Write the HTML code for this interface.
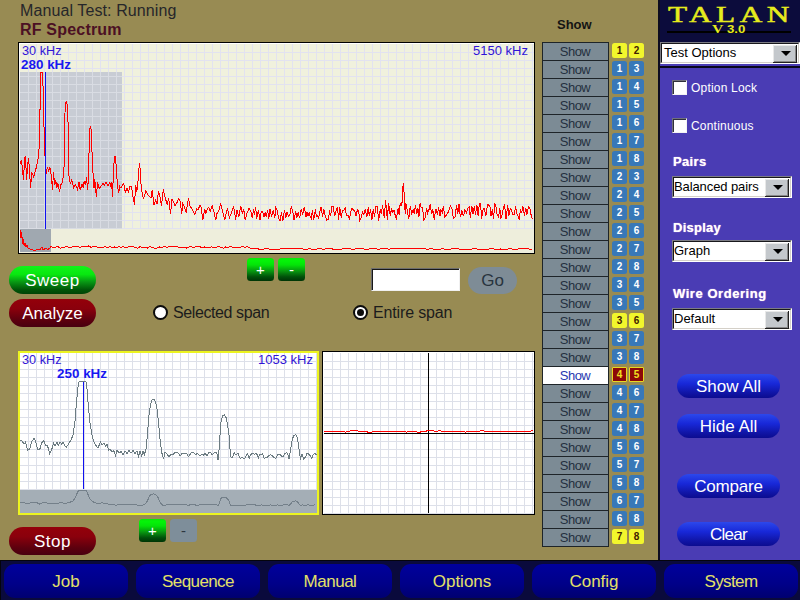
<!DOCTYPE html>
<html><head><meta charset="utf-8"><title>TALAN</title>
<style>
html,body{margin:0;padding:0}
body{width:800px;height:600px;overflow:hidden;background:#988b53;position:relative;font-family:"Liberation Sans",sans-serif;color:#1c1c1c}
.abs{position:absolute}
.t{position:absolute;white-space:nowrap;line-height:1}
svg{position:absolute;left:0;top:0}
svg text{font-family:"Liberation Sans",sans-serif}
.pill{position:absolute;border-radius:14px;color:#fff;font-size:17px;text-align:center;white-space:nowrap}
.row{position:absolute;left:542px;width:110px;height:18px}
.sb{position:absolute;left:0;top:0;width:65px;text-indent:-1px;height:17px;border:1px solid #1e2428;border-bottom:none;background:#7c8b95;color:#243040;font-size:13px;line-height:17px;text-align:center;letter-spacing:-0.5px}
.row i{position:absolute;left:70px;top:1px;width:15px;height:15px;border-radius:2.5px;background:#3878b8;color:#fff;font-style:normal;font-weight:bold;font-size:10px;line-height:15px;text-align:center}
.row i.n2{left:87px}
.row.yl i{background:#f2f62c;color:#402000}
.row.rd i{border-radius:1px;background:#8c0808;color:#f0e020;box-shadow:inset 0 0 0 1px #e8d820}
.row.rd .sb{background:#fff;color:#2838b0}
.dd{position:absolute;box-sizing:border-box;height:22px;background:#fff;border:1px solid;border-color:#7c7c84 #fff #fff #7c7c84;font-size:13px;color:#000}
.dd:before{content:"";position:absolute;left:0;top:0;right:0;bottom:0;border:1px solid;border-color:#18181c #d4d0c8 #d4d0c8 #18181c}
.dd span{position:absolute;left:3px;top:3px;line-height:14px;white-space:nowrap}
.dd b{position:absolute;right:2px;top:2px;width:24px;height:18px;background:#c4c8cc;box-shadow:inset -1px -1px 0 #202020,inset 1px 1px 0 #e8e8e8,inset -2px -2px 0 #888}
.dd b:after{content:"";position:absolute;left:8px;top:6px;border:5px solid transparent;border-top:5px solid #000;border-bottom:none}
.cb{position:absolute;width:15px;height:15px;box-sizing:border-box;background:#fff;border:1px solid;border-color:#70707c #f4f4f4 #f4f4f4 #70707c;box-shadow:inset 1px 1px 0 #30303c}
.lab{position:absolute;color:#fff;font-size:12px;letter-spacing:.2px;white-space:nowrap;line-height:14px}
.hd{position:absolute;color:#fff;font-weight:bold;font-size:13px;white-space:nowrap;line-height:14px;text-shadow:0 0 1px #f8c8e8}
.nav{position:absolute;top:564px;width:124px;height:34px;border-radius:11px;background:linear-gradient(#00009c,#000088 60%,#000070);color:#e4e068;font-size:17px;line-height:36px;text-align:center}
.sq{position:absolute;width:27px;height:23px;border-radius:3.5px;color:#fff;font-size:15px;line-height:23px;text-align:center}
.g{background:linear-gradient(#08e808,#04f408 12%,#04e408 30%,#089c10 55%,#00500a 82%,#003406)}
.bl{background:linear-gradient(#2c48ec,#1828d8 40%,#1014a4 80%,#0c0c90)}
</style></head><body>

<div class="t" style="left:20px;top:3px;font-size:16px;color:#26262a;letter-spacing:.1px">Manual Test: Running</div>
<div class="t" style="left:20px;top:22px;font-size:16px;font-weight:bold;color:#4c1024;letter-spacing:.2px">RF Spectrum</div>
<div class="t" style="left:557px;top:18px;font-size:13px;font-weight:bold;color:#141414">Show</div>

<svg width="800" height="600" viewBox="0 0 800 600">
<!-- upper chart -->
<rect x="18" y="42" width="517" height="212" fill="#000" shape-rendering="crispEdges"/>
<rect x="19" y="43" width="515" height="210" fill="#fff" shape-rendering="crispEdges"/>
<rect x="20" y="44" width="514" height="209" fill="#f0f1dd" shape-rendering="crispEdges"/>
<path d="M28.5 44V229M36.5 44V229M44.5 44V229M52.5 44V229M60.5 44V229M68.5 44V229M76.5 44V229M84.5 44V229M92.5 44V229M100.5 44V229M108.5 44V229M116.5 44V229M124.5 44V229M132.5 44V229M140.5 44V229M148.5 44V229M156.5 44V229M164.5 44V229M172.5 44V229M180.5 44V229M188.5 44V229M196.5 44V229M204.5 44V229M212.5 44V229M220.5 44V229M228.5 44V229M236.5 44V229M244.5 44V229M252.5 44V229M260.5 44V229M268.5 44V229M276.5 44V229M284.5 44V229M292.5 44V229M300.5 44V229M308.5 44V229M316.5 44V229M324.5 44V229M332.5 44V229M340.5 44V229M348.5 44V229M356.5 44V229M364.5 44V229M372.5 44V229M380.5 44V229M388.5 44V229M396.5 44V229M404.5 44V229M412.5 44V229M420.5 44V229M428.5 44V229M436.5 44V229M444.5 44V229M452.5 44V229M460.5 44V229M468.5 44V229M476.5 44V229M484.5 44V229M492.5 44V229M500.5 44V229M508.5 44V229M516.5 44V229M524.5 44V229M532.5 44V229M20 52.5H534M20 60.5H534M20 68.5H534M20 76.5H534M20 84.5H534M20 92.5H534M20 100.5H534M20 108.5H534M20 116.5H534M20 124.5H534M20 132.5H534M20 140.5H534M20 148.5H534M20 156.5H534M20 164.5H534M20 172.5H534M20 180.5H534M20 188.5H534M20 196.5H534M20 204.5H534M20 212.5H534M20 220.5H534M20 228.5H534" stroke="#e2e2f0" stroke-width="1" fill="none" shape-rendering="crispEdges"/>
<rect x="20" y="72" width="102" height="157" fill="#c8ccd4" shape-rendering="crispEdges"/>
<path d="M28.5 72V229M36.5 72V229M44.5 72V229M52.5 72V229M60.5 72V229M68.5 72V229M76.5 72V229M84.5 72V229M92.5 72V229M100.5 72V229M108.5 72V229M116.5 72V229M20 76.5H122M20 84.5H122M20 92.5H122M20 100.5H122M20 108.5H122M20 116.5H122M20 124.5H122M20 132.5H122M20 140.5H122M20 148.5H122M20 156.5H122M20 164.5H122M20 172.5H122M20 180.5H122M20 188.5H122M20 196.5H122M20 204.5H122M20 212.5H122M20 220.5H122M20 228.5H122" stroke="#d9dce3" stroke-width="1" fill="none" shape-rendering="crispEdges"/>
<rect x="20" y="229" width="514" height="24" fill="#eeeedc" shape-rendering="crispEdges"/>
<rect x="20" y="229" width="31" height="23" fill="#a0a8b0" shape-rendering="crispEdges"/>
<polyline points="20.2,164.0 21.2,160.2 22.0,164.8 23.5,179.8 24.7,157.2 25.5,156.5 26.5,179.8 28.3,158.0 29.2,165.5 30.5,187.7 31.8,172.2 33.7,176.8 36.2,167.8 38.5,156.5 39.7,140.0 40.4,72.5 42.7,72.5 42.9,81.0 43.8,120.7 44.5,140.0 45.0,155.8 46.0,174.5 47.5,167.0 48.7,170.8 49.8,167.0 51.2,175.2 52.5,189.5 53.5,172.2 54.7,185.0 55.8,179.8 56.8,188.0 57.7,182.8 59.5,191.8 61.0,184.2 62.5,183.5 64.0,167.8 64.5,133.5 65.2,105.0 66.5,100.8 67.8,109.5 68.3,140.0 68.8,174.5 70.3,183.5 71.8,179.8 73.8,188.0 75.2,184.2 77.5,189.5 79.0,182.0 80.2,190.2 82.0,184.2 83.2,188.0 84.2,181.2 85.3,185.0 86.5,177.5 87.7,190.2 88.8,167.8 89.2,140.0 90.2,126.0 91.4,130.5 92.2,158.0 93.2,176.8 94.0,188.0 94.8,179.0 95.5,189.5 96.5,196.7 97.5,182.0 99.2,188.8 100.8,186.5 103.0,183.5 104.5,185.0 106.0,182.0 107.8,185.8 109.8,182.8 110.5,185.0 111.5,182.0 112.5,196.7 113.5,170.0 114.5,156.2 115.5,156.2 116.2,167.0 117.2,182.0 118.5,193.2 119.8,186.5 121.0,188.0 122.2,185.8 123.7,183.5 125.2,192.5 127.0,188.0 128.5,191.8 130.0,186.5 131.5,186.5 132.7,195.5 134.5,204.5 135.7,185.0 136.8,191.8 137.8,183.5 139.4,163.2 140.5,172.2 141.2,188.0 143.5,199.2 145.8,191.0 148.0,194.8 149.5,196.2 151.0,197.8 152.2,190.2 154.0,205.2 155.5,200.0 157.0,203.8 158.5,191.0 160.0,197.0 161.5,206.0 163.3,189.5 165.2,197.8 167.2,204.5 168.7,197.8 170.5,214.2 172.0,199.2 173.5,201.5 175.0,206.0 176.8,203.0 178.8,198.5 180.2,201.5 181.8,213.5 182.8,203.8 184.3,206.8 186.2,212.0 188.5,197.8 190.0,206.0 192.2,209.0 194.8,214.2 196.8,209.0 198.2,209.8 199.8,205.2 201.2,207.5 202.8,220.2 204.7,209.0 205.8,214.2 207.2,209.0 208.8,207.5 210.2,211.2 212.2,206.0 214.0,212.0 215.8,220.2 217.0,213.5 218.8,210.5 220.8,203.8 222.7,212.0 224.8,219.5 227.5,208.2 229.3,218.0 231.2,213.5 233.5,206.0 235.8,219.5 236.8,209.8 238.8,217.2 240.7,206.0 242.5,213.5 243.7,209.0 245.2,220.2 247.0,212.8 249.2,208.2 250.8,211.5 252.3,218.0 253.5,209.2 254.5,215.0 255.6,207.1 256.7,218.6 258.4,209.9 260.0,220.1 261.2,211.7 262.5,211.3 263.9,216.9 265.2,212.1 266.4,217.3 267.6,209.6 268.8,219.0 270.0,209.1 271.6,216.4 273.3,209.8 274.8,217.7 275.8,207.5 277.2,210.5 278.7,218.3 280.1,220.6 281.4,212.1 282.9,221.0 284.5,210.0 285.9,217.5 287.0,212.1 288.6,216.1 289.8,215.0 291.2,206.8 292.7,210.7 294.0,220.2 295.7,211.4 296.9,217.7 298.3,212.5 299.6,218.2 301.2,209.1 302.7,214.9 304.3,206.8 305.9,217.1 306.9,212.1 308.0,215.6 309.2,212.5 310.3,216.9 311.3,218.5 312.4,210.2 313.7,220.0 315.4,209.4 316.4,216.7 317.6,215.5 318.6,217.9 319.8,212.3 321.1,206.9 322.6,216.9 323.7,209.0 325.3,215.9 326.8,220.0 328.4,219.3 329.6,210.2 330.6,216.3 331.8,206.3 333.1,206.1 334.7,215.9 335.9,211.2 337.3,207.0 338.7,219.7 339.7,206.6 341.3,217.6 342.4,210.3 344.0,209.9 345.3,207.8 346.4,215.5 348.0,215.5 349.6,218.8 350.8,211.6 351.8,208.3 353.2,209.7 354.8,211.1 356.0,216.1 357.4,209.8 358.5,210.2 359.8,220.4 361.1,217.8 362.5,212.4 363.8,214.5 365.3,209.4 366.9,216.6 368.2,207.4 369.3,216.1 370.5,209.2 371.9,220.4 373.2,209.2 374.5,217.4 375.9,206.4 377.4,206.4 378.6,220.6 380.2,209.6 381.5,214.3 382.5,204.6 384.2,217.9 385.6,200.5 387.3,219.6 388.6,203.1 390.2,215.7 391.5,209.0 392.8,212.6 394.1,210.4 395.4,216.3 396.4,218.4 398.1,208.5 399.1,214.5 400.2,203.7 401.8,206.0 403.2,183.0 404.4,196.0 405.2,214.0 405.8,203.5 407.2,209.9 408.8,219.0 410.2,206.4 411.8,213.5 413.2,209.7 414.3,214.0 415.5,204.8 416.7,213.8 418.0,208.6 419.0,216.6 420.1,203.5 421.2,207.3 422.5,207.6 423.9,219.9 425.1,217.8 426.6,207.9 427.6,213.0 429.1,209.3 430.2,204.0 431.6,214.3 432.8,209.3 434.2,219.7 435.8,208.7 437.5,215.2 438.5,206.9 439.9,216.3 440.9,209.8 442.2,212.7 443.4,206.1 444.7,217.4 446.2,215.4 447.5,213.6 449.0,210.2 450.6,205.8 452.1,209.5 453.4,218.8 455.0,216.9 456.6,205.3 457.8,213.5 459.0,204.2 460.4,217.2 461.9,210.5 463.5,216.3 464.8,210.0 466.4,213.1 467.5,209.0 469.1,206.8 470.3,217.6 471.9,205.7 472.9,214.4 474.4,206.2 475.4,214.5 476.9,205.4 478.1,216.0 479.4,203.8 480.6,203.5 481.6,218.6 483.3,208.5 484.4,208.9 485.8,216.4 487.5,204.3 488.9,205.2 490.0,206.9 491.0,216.2 492.3,209.4 493.6,218.8 494.6,204.2 495.7,205.2 497.3,215.3 498.6,216.9 499.8,208.4 500.9,218.8 502.1,214.4 503.3,209.1 504.5,203.9 506.1,219.4 507.7,205.1 508.8,215.9 510.3,208.4 511.3,209.5 512.7,214.7 514.2,214.5 515.6,206.3 516.9,213.7 518.1,216.2 519.2,220.0 520.5,209.1 521.6,213.2 522.8,206.2 524.4,215.6 525.7,207.7 526.9,214.6 528.6,206.7 530.0,208.9 531.2,215.5 532.5,218.9" fill="none" stroke="#ff0000" stroke-width="1" shape-rendering="crispEdges"/>
<polyline points="20.0,229.5 21.0,238.0 21.6,232.0 22.6,244.0 23.3,239.0 24.2,246.0 25.0,243.0 26.0,247.0 27.0,245.5 28.0,248.0 30.0,249.0 33.0,250.0 36.0,250.0 38.0,249.0 40.0,249.5 42.0,247.0 43.0,249.5 46.0,248.5 48.0,249.5 50.0,248.0 51.0,246.4 52.5,247.7 55.4,247.3 57.8,246.4 59.9,248.1 62.6,247.9 65.6,246.8 67.2,246.7 69.5,247.6 72.4,246.9 74.9,247.0 77.1,246.6 78.6,247.0 80.5,247.3 82.9,246.1 84.6,246.1 87.1,246.9 88.8,245.7 91.1,247.4 93.1,246.8 95.5,246.4 97.5,247.2 100.4,247.6 103.3,247.3 105.1,246.8 108.0,247.7 110.0,246.4 112.3,247.6 114.4,246.9 116.9,248.1 118.7,246.5 120.7,247.2 123.3,246.8 126.0,247.7 128.2,246.8 131.2,247.0 133.9,246.8 135.7,247.8 137.7,248.1 139.9,246.7 141.7,247.2 144.2,248.1 146.0,247.1 147.8,248.2 149.5,246.5 151.1,247.1 153.9,248.0 156.5,248.2 159.4,247.0 161.2,248.1 163.8,246.5 166.3,247.1 168.4,247.0 170.1,246.4 172.1,247.0 175.0,246.6 177.9,246.8 180.0,247.9 182.7,247.2 184.3,247.3 186.3,248.1 188.1,247.1 191.0,246.5 193.1,247.9 195.7,246.5 197.3,246.5 200.2,246.9 202.8,248.0 204.8,246.9 207.7,247.5 209.6,247.7 211.6,246.9 213.1,247.8 216.0,247.5 218.9,246.4 220.8,247.3 223.7,248.1 225.8,246.9 227.9,247.3 230.8,246.7 233.5,247.7 236.2,247.8 238.7,247.0 240.6,247.1 243.3,246.5 245.1,247.8 247.0,246.5 248.5,247.4 250.5,248.2 253.3,248.2 255.2,248.6 258.5,249.0 263.7,249.0 267.4,248.9 272.2,249.2 277.5,249.3 282.5,248.7 288.0,248.8 292.7,248.9 297.9,248.7 301.6,248.8 305.1,249.3 309.8,248.8 314.0,249.4 318.5,248.8 324.0,249.1 329.9,248.6 334.4,249.3 339.9,249.4 343.0,248.8 346.4,248.7 352.3,249.1 358.1,248.9 363.7,249.0 367.4,249.2 373.3,248.6 378.1,249.1 381.7,248.9 385.2,248.7 388.9,249.1 393.9,248.7 396.9,248.8 401.9,248.7 405.9,248.7 411.3,249.0 414.5,248.6 418.6,249.0 423.6,248.6 427.0,249.2 431.3,248.8 435.2,249.4 439.1,249.1 443.2,248.9 448.8,249.4 452.9,248.7 458.1,248.7 461.1,249.4 465.4,249.3 469.6,249.3 474.0,248.7 477.0,249.0 481.9,249.4 485.2,249.1 489.3,249.0 492.8,248.8 497.3,249.4 500.6,249.0 506.1,249.4 509.6,248.7 515.5,249.4 519.9,248.6 525.7,248.9 531.4,249.1 531.5,250.0" fill="none" stroke="#ff0000" stroke-width="1" shape-rendering="crispEdges"/>
<rect x="45" y="72" width="1" height="157" fill="#1010f0" shape-rendering="crispEdges"/>
<text x="22" y="55" font-size="13" fill="#3014d6" textLength="39.5" lengthAdjust="spacingAndGlyphs">30 kHz</text>
<text x="21" y="69" font-size="13" font-weight="bold" fill="#1818f0" textLength="50" lengthAdjust="spacingAndGlyphs">280 kHz</text>
<text x="473" y="55" font-size="13" fill="#3014d6" textLength="55" lengthAdjust="spacingAndGlyphs">5150 kHz</text>

<!-- lower-left chart -->
<rect x="18" y="351" width="301" height="164" fill="#ecf420" shape-rendering="crispEdges"/>
<rect x="20" y="353" width="297" height="160" fill="#fff" shape-rendering="crispEdges"/>
<path d="M28.5 353V490M36.5 353V490M44.5 353V490M52.5 353V490M60.5 353V490M68.5 353V490M76.5 353V490M84.5 353V490M92.5 353V490M100.5 353V490M108.5 353V490M116.5 353V490M124.5 353V490M132.5 353V490M140.5 353V490M148.5 353V490M156.5 353V490M164.5 353V490M172.5 353V490M180.5 353V490M188.5 353V490M196.5 353V490M204.5 353V490M212.5 353V490M220.5 353V490M228.5 353V490M236.5 353V490M244.5 353V490M252.5 353V490M260.5 353V490M268.5 353V490M276.5 353V490M284.5 353V490M292.5 353V490M300.5 353V490M308.5 353V490M316.5 353V490M20 361.5H317M20 369.5H317M20 377.5H317M20 385.5H317M20 393.5H317M20 401.5H317M20 409.5H317M20 417.5H317M20 425.5H317M20 433.5H317M20 441.5H317M20 449.5H317M20 457.5H317M20 465.5H317M20 473.5H317M20 481.5H317M20 489.5H317" stroke="#dde0e9" stroke-width="1" fill="none" shape-rendering="crispEdges"/>
<rect x="20" y="490" width="297" height="23" fill="#a4aeb6" shape-rendering="crispEdges"/>
<polyline points="20.4,440.0 22.0,441.0 24.0,444.0 25.6,442.0 27.6,450.0 29.6,449.0 32.0,441.0 34.0,438.6 35.6,441.0 37.6,449.4 39.6,450.0 41.6,443.0 43.6,440.6 45.6,445.0 47.6,446.0 49.6,453.4 51.6,450.0 53.6,443.0 55.0,446.0 57.0,442.6 58.4,445.4 60.0,442.0 61.6,444.0 63.0,442.0 65.0,446.0 66.4,447.4 68.4,444.0 71.0,440.0 73.0,435.0 75.0,421.0 76.6,401.0 78.0,387.0 79.0,381.6 86.0,381.6 87.0,389.0 88.4,407.0 90.0,423.0 92.0,435.0 94.0,442.0 96.0,445.4 98.0,448.0 100.4,442.0 102.0,444.6 104.0,443.0 105.6,446.0 107.0,444.0 108.4,450.0 110.0,449.0 112.0,452.0 114.0,450.6 115.6,456.0 117.0,450.0 119.0,453.0 121.0,451.6 123.0,454.6 125.0,451.0 127.0,453.4 129.0,450.6 131.0,453.0 133.0,450.6 135.0,453.4 137.0,451.0 138.6,456.6 140.0,450.6 141.6,456.0 143.0,451.0 144.4,454.6 146.0,449.0 147.4,435.0 149.0,415.0 150.4,405.0 152.0,400.0 154.0,399.0 155.6,402.0 157.0,409.0 158.4,421.0 160.0,439.0 161.6,452.0 163.6,459.0 165.0,452.0 167.0,454.0 169.0,457.0 171.0,454.0 173.0,455.0 175.0,452.0 176.5,452.8 178.5,453.1 180.1,456.2 182.1,452.9 183.5,454.0 185.3,453.9 186.6,453.2 188.5,456.5 189.7,454.8 191.7,452.2 193.7,452.6 195.5,454.8 197.4,453.5 199.0,454.9 200.6,455.3 202.3,454.2 203.5,455.1 205.2,453.2 207.1,455.9 208.8,452.9 210.5,452.5 211.8,454.2 213.1,454.2 214.8,452.2 216.6,452.4 217.0,454.0 218.0,460.0 219.0,450.0 220.0,435.0 221.0,422.0 222.4,416.0 224.4,415.0 226.4,418.0 227.6,425.0 229.0,435.0 230.0,449.0 231.0,457.0 232.5,457.2 234.2,452.8 235.9,454.8 238.1,453.3 240.1,458.5 242.1,457.4 243.4,458.4 245.1,458.2 247.3,453.5 249.2,458.1 250.5,454.6 252.5,453.5 254.6,454.1 256.6,453.4 258.3,458.0 259.7,454.1 261.4,454.4 262.6,453.6 264.0,458.1 265.9,457.9 267.2,457.2 268.6,455.7 270.4,454.7 272.5,455.8 274.2,457.8 275.6,458.5 277.4,454.9 279.4,454.1 281.6,456.0 283.1,457.1 284.8,453.6 286.7,452.8 288.0,455.0 289.0,459.0 290.4,451.0 292.0,441.0 293.6,435.6 295.6,434.6 297.0,437.0 298.4,444.0 299.6,454.0 300.6,458.0 302.0,454.5 303.8,458.9 305.6,457.0 307.1,453.0 308.4,453.9 310.2,455.6 311.9,458.4 313.2,454.4 315.1,453.1 316.3,455.1" fill="none" stroke="#6c7c82" stroke-width="1" shape-rendering="crispEdges"/>
<polyline points="20.4,502.0 24.0,502.8 27.6,504.0 32.0,502.2 35.6,502.2 39.6,504.0 43.6,502.2 47.6,503.2 51.6,504.0 55.0,503.2 58.4,503.1 61.6,502.8 65.0,503.2 68.4,502.8 73.0,501.0 75.0,498.3 76.6,494.3 78.0,491.6 79.0,490.5 86.0,490.5 87.0,492.0 88.4,495.5 90.0,498.7 92.0,501.0 94.0,502.4 98.0,503.6 102.0,502.9 105.6,503.2 108.4,504.0 112.0,504.4 115.6,505.2 119.0,504.6 123.0,504.9 127.0,504.7 131.0,504.6 135.0,504.7 138.6,505.3 141.6,505.2 144.4,504.9 147.4,501.0 149.0,497.1 150.4,495.1 152.0,494.1 154.0,493.9 155.6,494.5 157.0,495.9 158.4,498.3 160.0,501.8 161.6,504.4 163.6,505.8 167.0,504.8 171.0,504.8 175.0,504.4 178.5,504.6 182.1,504.6 185.3,504.8 188.5,505.3 191.7,504.4 195.5,505.0 199.0,505.0 202.3,504.8 205.2,504.6 208.8,504.6 211.8,504.8 214.8,504.4 217.0,504.8 218.0,506.0 219.0,504.0 220.0,501.0 221.0,498.5 222.4,497.3 224.4,497.1 226.4,497.7 227.6,499.1 229.0,501.0 230.0,503.8 231.0,505.4 232.5,505.4 235.9,505.0 240.1,505.7 243.4,505.7 247.3,504.7 250.5,504.9 254.6,504.8 258.3,505.6 261.4,504.9 264.0,505.6 267.2,505.4 270.4,504.9 274.2,505.6 277.4,505.0 281.6,505.2 284.8,504.7 288.0,505.0 289.0,505.8 290.4,504.2 292.0,502.2 293.6,501.2 295.6,501.0 297.0,501.4 298.4,502.8 299.6,504.8 300.6,505.6 302.0,504.9 305.6,505.4 308.4,504.8 311.9,505.7 315.1,504.6" fill="none" stroke="#74808a" stroke-width="1" shape-rendering="crispEdges"/>
<rect x="83" y="382" width="1" height="107" fill="#1010f0" shape-rendering="crispEdges"/>
<text x="22" y="364" font-size="13" fill="#3014d6" textLength="39.5" lengthAdjust="spacingAndGlyphs">30 kHz</text>
<text x="57" y="378" font-size="13" font-weight="bold" fill="#1818f0" textLength="50" lengthAdjust="spacingAndGlyphs">250 kHz</text>
<text x="258" y="364" font-size="13" fill="#3014d6" textLength="55" lengthAdjust="spacingAndGlyphs">1053 kHz</text>

<!-- lower-right chart -->
<rect x="322" y="351" width="213" height="164" fill="#000" shape-rendering="crispEdges"/>
<rect x="323" y="352" width="211" height="162" fill="#fff" shape-rendering="crispEdges"/>
<path d="M332.5 353V514M340.5 353V514M348.5 353V514M356.5 353V514M364.5 353V514M372.5 353V514M380.5 353V514M388.5 353V514M396.5 353V514M404.5 353V514M412.5 353V514M420.5 353V514M428.5 353V514M436.5 353V514M444.5 353V514M452.5 353V514M460.5 353V514M468.5 353V514M476.5 353V514M484.5 353V514M492.5 353V514M500.5 353V514M508.5 353V514M516.5 353V514M524.5 353V514M532.5 353V514M324 361.5H534M324 369.5H534M324 377.5H534M324 385.5H534M324 393.5H534M324 401.5H534M324 409.5H534M324 417.5H534M324 425.5H534M324 433.5H534M324 441.5H534M324 449.5H534M324 457.5H534M324 465.5H534M324 473.5H534M324 481.5H534M324 489.5H534M324 497.5H534M324 505.5H534M324 513.5H534" stroke="#dde0e9" stroke-width="1" fill="none" shape-rendering="crispEdges"/>
<rect x="428" y="353" width="1" height="160" fill="#000" shape-rendering="crispEdges"/>
<rect x="324" y="433" width="210" height="1" fill="#000" shape-rendering="crispEdges"/>
<polyline points="324.0,431.5 327.6,431.5 331.4,431.5 334.0,432.1 336.4,431.5 341.3,431.5 345.4,432.1 347.7,431.5 352.3,430.5 355.5,430.5 360.4,431.5 364.3,431.5 368.1,432.1 371.9,432.1 374.7,431.5 376.8,431.5 380.0,431.5 382.5,431.5 384.5,431.5 386.9,431.5 390.5,431.5 394.9,431.5 398.5,431.5 401.4,431.5 406.3,432.1 410.5,431.5 413.6,431.5 417.9,432.1 420.1,432.1 422.6,431.5 425.4,431.5 427.8,430.5 431.9,430.5 435.8,431.5 439.9,430.5 442.8,431.5 445.0,431.5 447.5,431.5 452.1,431.5 456.9,431.5 459.5,431.5 462.4,431.5 465.6,432.1 469.0,431.5 473.6,431.5 478.4,431.5 482.2,430.5 486.5,431.5 490.4,431.5 494.1,431.5 496.5,431.5 498.9,431.5 501.9,431.5 506.0,431.5 508.1,431.5 512.2,431.5 514.4,431.5 517.0,431.5 521.6,431.5 524.0,431.5 526.6,431.5 528.7,431.5 533.2,430.5" fill="none" stroke="#ff0000" stroke-width="1" shape-rendering="crispEdges"/>
</svg>

<!-- buttons -->
<div class="pill" style="left:9px;top:266px;width:87px;height:28px;line-height:28px;background:linear-gradient(#10f418,#08e810 30%,#089c14 55%,#005408 85%,#004406);letter-spacing:.5px;line-height:30px">Sweep</div>
<div class="pill" style="left:9px;top:299px;width:87px;height:28px;line-height:30px;background:linear-gradient(#94000a,#8a000c 35%,#5c000e 75%,#480010)">Analyze</div>
<div class="pill" style="left:9px;top:527px;width:87px;height:28px;line-height:30px;letter-spacing:.5px;background:linear-gradient(#94000a,#8a000c 35%,#5c000e 75%,#480010)">Stop</div>

<div class="sq g p" style="left:247px;top:258px">+</div>
<div class="sq g m" style="left:278px;top:258px">-</div>
<div class="sq g p" style="left:139px;top:519px">+</div>
<div class="sq m" style="left:170px;top:519px;background:#7e8e9a;color:#2c3640">-</div>

<div class="abs" style="left:371px;top:268px;width:89px;height:23px;box-sizing:border-box;background:#fff;border:1px solid;border-color:#6c6c6c #f0f0f0 #f0f0f0 #6c6c6c;box-shadow:inset 1px 1px 0 #181818"></div>
<div class="pill" style="left:468px;top:267px;width:49px;height:27px;line-height:27px;background:#7e8c96;color:#28343e">Go</div>

<div class="abs" style="left:153px;top:305px;width:15px;height:15px;box-sizing:border-box;border-radius:50%;border:2px solid #0c0c0c;background:#fff"></div>
<div class="t" style="left:173px;top:305px;font-size:16px;letter-spacing:-.4px">Selected span</div>
<div class="abs" style="left:353px;top:305px;width:15px;height:15px;box-sizing:border-box;border-radius:50%;border:2px solid #0c0c0c;background:#fff"></div>
<div class="abs" style="left:357px;top:309px;width:7px;height:7px;border-radius:50%;background:#0c0c0c"></div>
<div class="t" style="left:373px;top:305px;font-size:16px;letter-spacing:-.15px">Entire span</div>

<!-- show list -->
<div class="row yl" style="top:42px"><div class="sb">Show</div><i>1</i><i class="n2">2</i></div>
<div class="row" style="top:60px"><div class="sb">Show</div><i>1</i><i class="n2">3</i></div>
<div class="row" style="top:78px"><div class="sb">Show</div><i>1</i><i class="n2">4</i></div>
<div class="row" style="top:96px"><div class="sb">Show</div><i>1</i><i class="n2">5</i></div>
<div class="row" style="top:114px"><div class="sb">Show</div><i>1</i><i class="n2">6</i></div>
<div class="row" style="top:132px"><div class="sb">Show</div><i>1</i><i class="n2">7</i></div>
<div class="row" style="top:150px"><div class="sb">Show</div><i>1</i><i class="n2">8</i></div>
<div class="row" style="top:168px"><div class="sb">Show</div><i>2</i><i class="n2">3</i></div>
<div class="row" style="top:186px"><div class="sb">Show</div><i>2</i><i class="n2">4</i></div>
<div class="row" style="top:204px"><div class="sb">Show</div><i>2</i><i class="n2">5</i></div>
<div class="row" style="top:222px"><div class="sb">Show</div><i>2</i><i class="n2">6</i></div>
<div class="row" style="top:240px"><div class="sb">Show</div><i>2</i><i class="n2">7</i></div>
<div class="row" style="top:258px"><div class="sb">Show</div><i>2</i><i class="n2">8</i></div>
<div class="row" style="top:276px"><div class="sb">Show</div><i>3</i><i class="n2">4</i></div>
<div class="row" style="top:294px"><div class="sb">Show</div><i>3</i><i class="n2">5</i></div>
<div class="row yl" style="top:312px"><div class="sb">Show</div><i>3</i><i class="n2">6</i></div>
<div class="row" style="top:330px"><div class="sb">Show</div><i>3</i><i class="n2">7</i></div>
<div class="row" style="top:348px"><div class="sb">Show</div><i>3</i><i class="n2">8</i></div>
<div class="row rd" style="top:366px"><div class="sb">Show</div><i>4</i><i class="n2">5</i></div>
<div class="row" style="top:384px"><div class="sb">Show</div><i>4</i><i class="n2">6</i></div>
<div class="row" style="top:402px"><div class="sb">Show</div><i>4</i><i class="n2">7</i></div>
<div class="row" style="top:420px"><div class="sb">Show</div><i>4</i><i class="n2">8</i></div>
<div class="row" style="top:438px"><div class="sb">Show</div><i>5</i><i class="n2">6</i></div>
<div class="row" style="top:456px"><div class="sb">Show</div><i>5</i><i class="n2">7</i></div>
<div class="row" style="top:474px"><div class="sb">Show</div><i>5</i><i class="n2">8</i></div>
<div class="row" style="top:492px"><div class="sb">Show</div><i>6</i><i class="n2">7</i></div>
<div class="row" style="top:510px"><div class="sb">Show</div><i>6</i><i class="n2">8</i></div>
<div class="row yl" style="top:528px"><div class="sb">Show</div><i>7</i><i class="n2">8</i></div>

<div class="abs" style="left:542px;top:546px;width:67px;height:1px;background:#1e2428"></div>

<!-- right panel -->
<div class="abs" style="left:658px;top:0;width:2px;height:560px;background:#0c0c20"></div>
<div class="abs" style="left:660px;top:0;width:140px;height:42px;background:#0c0c3c"></div>
<div class="abs" style="left:660px;top:64px;width:140px;height:496px;background:#4a3cb4"></div>
<div class="abs" style="left:660px;top:66px;width:140px;height:2px;background:#08081c"></div>
<div class="abs" style="left:667px;top:31px;width:124px;height:1.5px;background:#000"></div>
<div class="t" style="left:668px;top:3.5px;font-family:'Liberation Serif',serif;font-size:22.5px;color:#e6ec1c;letter-spacing:3.2px;transform-origin:0 0;transform:scaleX(1.39);-webkit-text-stroke:.5px #e6ec1c">TALAN</div>
<div class="t" style="left:712px;top:23px;font-family:'Liberation Serif',serif;font-size:12.5px;font-weight:bold;color:#e6ec1c;transform-origin:0 0;transform:scaleX(1.25)">V</div>
<div class="t" style="left:727px;top:24px;font-size:11.5px;font-weight:bold;color:#e6ec1c;transform-origin:0 0;transform:scaleX(1.15)">3.0</div>

<div class="dd" style="left:660px;top:42px;width:140px"><span>Test Options</span><b></b></div>
<div class="cb" style="left:672px;top:80px"></div><div class="lab" style="left:691px;top:81px">Option Lock</div>
<div class="cb" style="left:672px;top:118px"></div><div class="lab" style="left:691px;top:119px">Continuous</div>
<div class="hd" style="left:673px;top:155px;letter-spacing:.35px">Pairs</div>
<div class="dd" style="left:672px;top:176px;width:120px"><span style="left:1px;letter-spacing:-.1px">Balanced pairs</span><b></b></div>
<div class="hd" style="left:673px;top:221px;letter-spacing:.25px">Display</div>
<div class="dd" style="left:672px;top:240px;width:120px"><span style="left:1px">Graph</span><b></b></div>
<div class="hd" style="left:673px;top:287px;letter-spacing:.55px">Wire Ordering</div>
<div class="dd" style="left:672px;top:308px;width:120px"><span style="left:1px">Default</span><b></b></div>

<div class="pill bl" style="left:677px;top:374px;width:103px;height:24px;line-height:26px">Show All</div>
<div class="pill bl" style="left:677px;top:414px;width:103px;height:24px;line-height:26px">Hide All</div>
<div class="pill bl" style="left:677px;top:474px;width:103px;height:24px;line-height:26px;letter-spacing:-.2px">Compare</div>
<div class="pill bl" style="left:677px;top:522px;width:103px;height:24px;line-height:26px;letter-spacing:-.7px">Clear</div>

<!-- bottom nav -->
<div class="abs" style="left:0;top:560px;width:800px;height:40px;background:#0a0a3c"></div>
<div class="abs" style="left:0;top:560px;width:800px;height:1px;background:#04040c"></div>
<div class="abs" style="left:0;top:560px;width:1px;height:40px;background:#04040c"></div>
<div class="nav" style="left:4px">Job</div>
<div class="nav" style="left:136px;letter-spacing:-.6px">Sequence</div>
<div class="nav" style="left:268px;letter-spacing:-.5px">Manual</div>
<div class="nav" style="left:400px">Options</div>
<div class="nav" style="left:532px">Config</div>
<div class="nav" style="left:664px;width:134px;letter-spacing:-.6px">System</div>
</body></html>
